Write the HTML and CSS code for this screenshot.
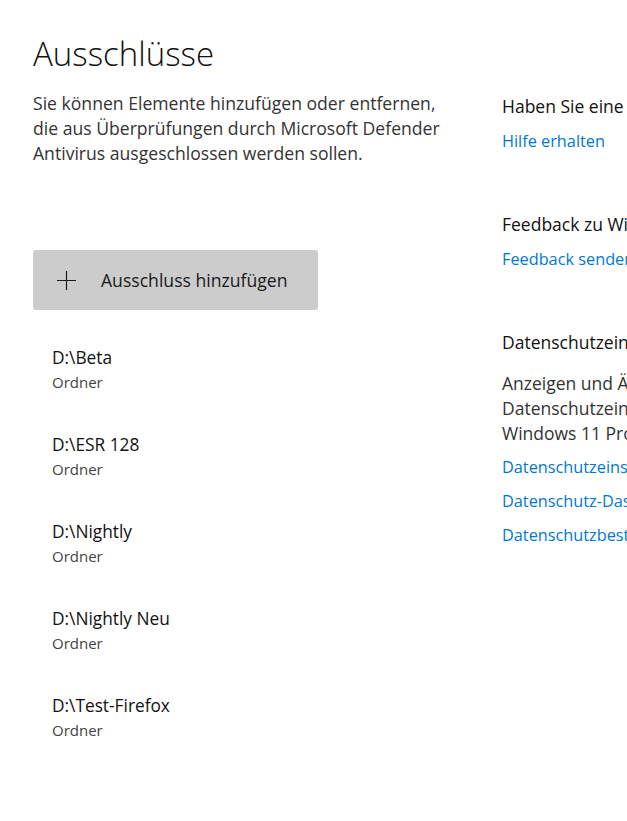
FILE: index.html
```html
<!DOCTYPE html>
<html lang="de">
  <head>
    <meta charset="utf-8">
    <title>Ausschlüsse</title>
    <link rel="stylesheet" href="styles.css">
  </head>
  <body>
    <div class="page">
      <div class="main">
        <h1 class="title">Ausschlüsse</h1>
        <p class="intro">Sie können Elemente hinzufügen oder entfernen, die aus Überprüfungen durch Microsoft Defender Antivirus ausgeschlossen werden sollen.</p>

        <button class="add-btn">
          <svg class="plus" width="19" height="19" viewBox="0 0 19 19">
            <path d="M9.5 0 V19 M0 9.5 H19" stroke="#1a1a1a" stroke-width="1.2" fill="none"/>
          </svg>
          <span>Ausschluss hinzufügen</span>
        </button>

        <ul class="list">
          <li><div class="name">D:\Beta</div><div class="type">Ordner</div></li>
          <li><div class="name">D:\ESR 128</div><div class="type">Ordner</div></li>
          <li><div class="name">D:\Nightly</div><div class="type">Ordner</div></li>
          <li><div class="name">D:\Nightly Neu</div><div class="type">Ordner</div></li>
          <li><div class="name">D:\Test-Firefox</div><div class="type">Ordner</div></li>
        </ul>
      </div>

      <div class="side">
        <div class="block">
          <div class="head">Haben Sie eine Frage?</div>
          <a class="link" href="#">Hilfe erhalten</a>
        </div>
        <div class="block">
          <div class="head">Feedback zu Windows-Sicherheit</div>
          <a class="link" href="#">Feedback senden</a>
        </div>
        <div class="block">
          <div class="head">Datenschutzeinstellungen ändern</div>
          <p class="side-text">Anzeigen und Ändern der<br>Datenschutzeinstellungen für Ihr<br>Windows 11 Pro-Gerät.</p>
          <a class="link small" href="#">Datenschutzeinstellungen</a>
          <a class="link small" href="#">Datenschutz-Dashboard</a>
          <a class="link small" href="#">Datenschutzbestimmungen</a>
        </div>
      </div>
    </div>
  </body>
</html>
```

FILE: styles.css
```css
* {
  box-sizing: border-box;
}

html, body {
  margin: 0;
  overflow: hidden;
  background: #fff;
}

body {
  font-family: "Open Sans", "Noto Sans", sans-serif;
  color: #1a1a1a;
}

/* the window cuts the right column off */
.page {
  display: flex;
  width: 627px;
  overflow: hidden;
  padding-left: 33px;
}

/* left column */
.main {
  width: 469px;
  flex: none;
}

.title {
  font-size: 33px;
  font-weight: 300;
  margin: 32px 0 0;
  line-height: 44px;
  color: #111;
}

.intro {
  font-size: 17.6px;
  line-height: 25px;
  color: #333;
  margin: 15px 0 0;
  width: 425px;
}

.add-btn {
  display: flex;
  align-items: center;
  width: 285px;
  height: 60px;
  margin-top: 84px;
  padding: 0 0 0 24px;
  border: none;
  border-radius: 3px;
  background: #cccccc;
  font-family: inherit;
  font-size: 17.6px;
  color: #1a1a1a;
}

.plus {
  margin-right: 25px;
}

.list {
  list-style: none;
  margin: 36px 0 0;
  padding: 0 0 0 19px;
}

.list li {
  height: 87px;
}

.name {
  font-size: 17.3px;
  line-height: 24px;
  color: #111;
}

.type {
  font-size: 15px;
  line-height: 24px;
  color: #444;
}

/* right column */
.side {
  flex: none;
  width: 300px;
  padding-top: 93px;
  white-space: nowrap;
}

.block {
  margin-bottom: 57px;
}

.head {
  font-size: 17.5px;
  line-height: 26px;
  color: #111;
}

.link {
  display: block;
  color: #0078d4;
  text-decoration: none;
  font-size: 16.3px;
  line-height: 26px;
  margin-top: 9px;
}

.link.small {
  margin-top: 7px;
}

.side-text + .link.small {
  margin-top: 8px;
}

.link.small + .link.small {
  margin-top: 7px;
  padding-top: 1px;
}

.side-text {
  font-size: 17.5px;
  line-height: 25px;
  color: #333;
  margin: 16px 0 5px;
}
```
